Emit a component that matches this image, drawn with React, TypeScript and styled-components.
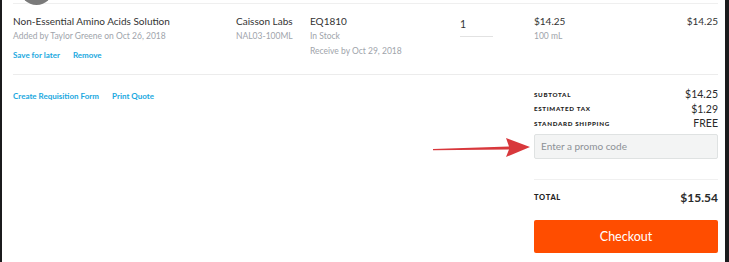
import React from "react";
import styled, { createGlobalStyle } from "styled-components";

const GlobalStyle = createGlobalStyle`
  html, body {
    margin: 0;
    padding: 0;
    background: #1b1b1d;
  }
  body {
    font-family: "Lato", "Liberation Sans", sans-serif;
    color: #333;
  }
`;

const Page = styled.div`
  width: 729px;
  height: 262px;
  display: flex;
  padding: 0 4px 0 2px;
  box-sizing: border-box;
`;

const Card = styled.div`
  position: relative;
  flex: 1;
  background: #fff;
  padding: 0 7px 0 11px;
  overflow: hidden;
`;

const TopEdge = styled.div`
  position: relative;
  height: 3px;
  border-bottom: 1px solid #efefef;
`;

const Avatar = styled.div`
  position: absolute;
  left: 7px;
  top: -28px;
  width: 33px;
  height: 33px;
  border-radius: 50%;
  background: #7a7a7a;
`;

const ItemRow = styled.div`
  display: grid;
  grid-template-columns: 223px 74px 150px 74px 1fr auto;
  height: 71px;
  padding-top: 10px;
  box-sizing: border-box;
  border-bottom: 1px solid #ececec;
`;

const Cell = styled.div<{ $right?: boolean }>`
  display: flex;
  flex-direction: column;
  align-items: ${(p) => (p.$right ? "flex-end" : "flex-start")};
`;

const Main = styled.div`
  font-size: 10px;
  line-height: 15px;
  color: #333;
  white-space: nowrap;
`;

const Sub = styled.div`
  font-size: 8.5px;
  line-height: 15px;
  color: #a0a4ab;
  white-space: nowrap;
`;

const Links = styled.div`
  display: flex;
  gap: 13px;
  margin-top: 5px;
`;

const LinkText = styled.a`
  font-size: 8px;
  font-weight: 700;
  color: #1aa8e0;
  line-height: 12px;
  text-decoration: none;
  white-space: nowrap;
`;

const Qty = styled.div`
  width: 33px;
  margin-top: 3px;
  padding-bottom: 5px;
  border-bottom: 1px solid #e2e2e2;
  font-size: 10.5px;
  line-height: 14px;
  color: #333;
`;

const Bottom = styled.div`
  display: flex;
  justify-content: space-between;
  padding-top: 12px;
`;

const Actions = styled.div`
  display: flex;
  gap: 13px;
  margin-top: 3px;
`;

const Summary = styled.div`
  width: 184px;
  display: flex;
  flex-direction: column;
`;

const SummaryRow = styled.div`
  display: flex;
  justify-content: space-between;
  align-items: center;
  height: 14.5px;
`;

const Label = styled.span<{ $big?: boolean }>`
  font-size: ${(p) => (p.$big ? 7.5 : 6.2)}px;
  font-weight: 900;
  letter-spacing: 0.7px;
  color: #222;
`;

const Value = styled.span<{ $bold?: boolean }>`
  font-size: ${(p) => (p.$bold ? 12 : 10.5)}px;
  font-weight: ${(p) => (p.$bold ? 700 : 400)};
  color: #2a2a2a;
`;

const Promo = styled.input`
  margin-top: 3px;
  height: 25px;
  box-sizing: border-box;
  border: 1px solid #dfe2e2;
  border-radius: 2px;
  background: #f3f4f4;
  padding: 0 6px;
  font-family: inherit;
  font-size: 10px;
  color: #333;
  &::placeholder {
    color: #8d9196;
  }
`;

const TotalRow = styled.div`
  margin-top: 20px;
  border-top: 1px solid #f0f0f0;
  display: flex;
  justify-content: space-between;
  align-items: center;
  height: 35px;
`;

const Checkout = styled.button`
  margin-top: 5px;
  height: 33px;
  border: none;
  border-radius: 2px;
  background: #ff4d00;
  color: #fff;
  font-family: inherit;
  font-size: 12.5px;
  cursor: pointer;
`;

const Arrow = styled.svg`
  position: absolute;
  left: 427px;
  top: 135px;
`;

export default function App() {
  return (
    <>
      <GlobalStyle />
      <Page>
        <Card>
          <TopEdge>
            <Avatar />
          </TopEdge>
          <ItemRow>
            <Cell>
              <Main>Non-Essential Amino Acids Solution</Main>
              <Sub>Added by Taylor Greene on Oct 26, 2018</Sub>
              <Links>
                <LinkText>Save for later</LinkText>
                <LinkText>Remove</LinkText>
              </Links>
            </Cell>
            <Cell>
              <Main>Caisson Labs</Main>
              <Sub>NAL03-100ML</Sub>
            </Cell>
            <Cell>
              <Main>EQ1810</Main>
              <Sub>In Stock</Sub>
              <Sub>Receive by Oct 29, 2018</Sub>
            </Cell>
            <Cell>
              <Qty>1</Qty>
            </Cell>
            <Cell>
              <Main>$14.25</Main>
              <Sub>100 mL</Sub>
            </Cell>
            <Cell $right>
              <Main>$14.25</Main>
            </Cell>
          </ItemRow>
          <Bottom>
            <Actions>
              <LinkText>Create Requisition Form</LinkText>
              <LinkText>Print Quote</LinkText>
            </Actions>
            <Summary>
              <SummaryRow>
                <Label>SUBTOTAL</Label>
                <Value>$14.25</Value>
              </SummaryRow>
              <SummaryRow>
                <Label>ESTIMATED TAX</Label>
                <Value>$1.29</Value>
              </SummaryRow>
              <SummaryRow>
                <Label>STANDARD SHIPPING</Label>
                <Value>FREE</Value>
              </SummaryRow>
              <Promo placeholder="Enter a promo code" />
              <TotalRow>
                <Label $big>TOTAL</Label>
                <Value $bold>$15.54</Value>
              </TotalRow>
              <Checkout>Checkout</Checkout>
            </Summary>
          </Bottom>
          <Arrow width="106" height="26" viewBox="0 0 106 26">
            <path
              d="M4 14 L80 11.5 L77 3 L101 12 L77 22 L80 14.5 L4 15.2 Z"
              fill="#d8383c"
            />
          </Arrow>
        </Card>
      </Page>
    </>
  );
}
